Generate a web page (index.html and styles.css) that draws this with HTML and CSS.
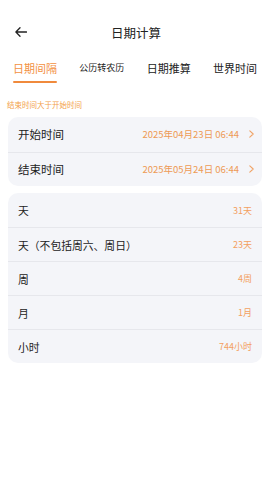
FILE: index.html
```html
<!DOCTYPE html>
<html lang="zh-CN">
<head>
<meta charset="utf-8">
<link rel="stylesheet" href="styles.css">
</head>
<body>
<div class="page">
  <header class="topbar">
    <svg class="back" width="12" height="10" viewBox="0 0 12 10"><path d="M11.5 5H1 M5 0.8L0.9 5L5 9.2" fill="none" stroke="#222" stroke-width="1.3" stroke-linecap="round" stroke-linejoin="round"/></svg>
    <div class="title">日期计算</div>
  </header>
  <nav class="tabs">
    <div class="tab active">日期间隔</div>
    <div class="tab small">公历转农历</div>
    <div class="tab">日期推算</div>
    <div class="tab">世界时间</div>
  </nav>
  <div class="note">结束时间大于开始时间</div>
  <section class="card">
    <div class="row big"><span class="label">开始时间</span><span class="val date">2025年04月23日 06:44<svg class="chev" width="5" height="8" viewBox="0 0 5 8"><path d="M0.8 0.8L4.2 4L0.8 7.2" fill="none" stroke="#f0a366" stroke-width="1.1" stroke-linecap="round" stroke-linejoin="round"/></svg></span></div>
    <div class="row big"><span class="label">结束时间</span><span class="val date">2025年05月24日 06:44<svg class="chev" width="5" height="8" viewBox="0 0 5 8"><path d="M0.8 0.8L4.2 4L0.8 7.2" fill="none" stroke="#f0a366" stroke-width="1.1" stroke-linecap="round" stroke-linejoin="round"/></svg></span></div>
  </section>
  <section class="card second">
    <div class="row"><span class="label">天</span><span class="val">31天</span></div>
    <div class="row"><span class="label">天（不包括周六、周日）</span><span class="val">23天</span></div>
    <div class="row"><span class="label">周</span><span class="val">4周</span></div>
    <div class="row"><span class="label">月</span><span class="val">1月</span></div>
    <div class="row"><span class="label">小时</span><span class="val">744小时</span></div>
  </section>
</div>
</body>
</html>
```

FILE: styles.css
```css
* { box-sizing: border-box; }
html, body { margin: 0; padding: 0; background: #fff; }
body {
  font-family: "Noto Sans CJK SC", "Noto Sans", sans-serif;
  color: #222;
  width: 270px;
  height: 480px;
  overflow: hidden;
}
.page { padding: 0 8px; }
.topbar {
  height: 36px;
  margin-top: 15px;
  display: flex;
  align-items: center;
  justify-content: center;
  position: relative;
}
.back { position: absolute; left: 7px; top: 12px; }
.title { font-size: 12.5px; line-height: 16px; margin-left: 2px; }
.tabs {
  display: flex;
  justify-content: space-between;
  align-items: center;
  height: 33px;
  padding: 0 5px;
}
.tab {
  font-size: 11px;
  line-height: 14px;
  position: relative;
  height: 33px;
  display: flex;
  align-items: center;
}
.tab.small { font-size: 9px; }
.tab.active { color: #f3913f; }
.tab.active::after {
  content: "";
  position: absolute;
  left: 0;
  right: 0;
  bottom: 1px;
  height: 2.5px;
  border-radius: 2px;
  background: #f08a3c;
}
.note {
  font-size: 7.5px;
  line-height: 10px;
  color: #f3a14a;
  margin-top: 16px;
  margin-left: -1px;
}
.card {
  background: #f4f5f9;
  border-radius: 10px;
  margin-top: 7px;
}
.card.second { margin-top: 7px; }
.row {
  height: 34px;
  display: flex;
  align-items: center;
  justify-content: space-between;
  padding: 0 10px;
  border-top: 1px solid #e6e7ec;
}
.row:first-child { border-top: none; }
.row.big { height: 34.5px; }
.label { font-size: 10.8px; }
.row.big .label { font-size: 11.5px; }
.val { font-size: 9px; color: #f3a060; }
.val.date { font-size: 9.5px; color: #ee9a55; display: flex; align-items: center; }
.chev { margin-left: 10px; margin-right: -2px; }
```
